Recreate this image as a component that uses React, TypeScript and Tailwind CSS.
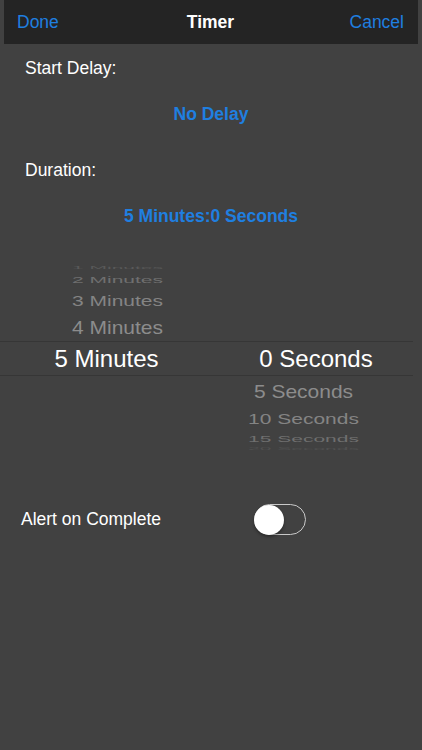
import React from "react";

const blue = "text-[#1f7fe0]";

// Wheel rows: height of the slot, vertical squash and tint, outermost first
const minuteRows = [
  { label: "1 Minutes", h: "h-[7px]", scale: "scale-y-[0.2]", color: "text-[#595959]" },
  { label: "2 Minutes", h: "h-[16px]", scale: "scale-y-[0.45]", color: "text-[#6f6f6f]" },
  { label: "3 Minutes", h: "h-[26px]", scale: "scale-y-[0.68]", color: "text-[#848484]" },
  { label: "4 Minutes", h: "h-[28px]", scale: "scale-y-[0.88]", color: "text-[#8c8c8c]" },
];

const secondRows = [
  { label: "5 Seconds", h: "h-[30px]", scale: "scale-y-[0.88]", color: "text-[#8c8c8c]" },
  { label: "10 Seconds", h: "h-[24px]", scale: "scale-y-[0.68]", color: "text-[#848484]" },
  { label: "15 Seconds", h: "h-[16px]", scale: "scale-y-[0.45]", color: "text-[#6f6f6f]" },
  { label: "20 Seconds", h: "h-[4px]", scale: "scale-y-[0.15]", color: "text-[#505050]" },
];

function WheelRow({
  label,
  h,
  scale,
  color,
}: {
  label: string;
  h: string;
  scale: string;
  color: string;
}) {
  return (
    <div className={`flex items-center justify-center overflow-visible ${h}`}>
      <span className={`whitespace-nowrap text-[21px] leading-none ${scale} ${color}`}>
        {label}
      </span>
    </div>
  );
}

function Toggle() {
  return (
    <div className="flex h-[31px] w-[52px] items-center rounded-full border-[1.5px] border-[#c9c9c9]">
      <div className="size-[30px] -ml-[1.5px] rounded-full bg-white shadow-[0_2px_3px_rgba(0,0,0,0.35)]" />
    </div>
  );
}

export default function App() {
  return (
    <div
      className="flex h-[750px] w-[422px] flex-col bg-[#414141] text-white"
      style={{ fontFamily: '"Liberation Sans", Arial, sans-serif' }}
    >
      {/* Nav bar */}
      <div className="mx-1 grid h-11 grid-cols-[1fr_auto_1fr] items-center bg-[#242424] pl-[13px] pr-[14px] pt-px text-[17.5px]">
        <span className={blue}>Done</span>
        <span className="font-bold">Timer</span>
        <span className={`text-right ${blue}`}>Cancel</span>
      </div>

      <div className="mt-[14px] pl-[25px] text-[17.5px] leading-5">Start Delay:</div>
      <div className={`mt-[26px] text-center text-[17.5px] font-bold leading-5 ${blue}`}>
        No Delay
      </div>

      <div className="mt-[36px] pl-[25px] text-[17.5px] leading-5">Duration:</div>
      <div className={`mt-[26px] text-center text-[17.5px] font-bold leading-5 ${blue}`}>
        5 Minutes:0 Seconds
      </div>

      {/* Picker wheel */}
      <div className="mt-[38px] flex flex-col">
        <div className="grid grid-cols-[207px_1fr]">
          <div className="flex flex-col pl-[28px]">
            {minuteRows.map((r) => (
              <WheelRow key={r.label} {...r} />
            ))}
          </div>
          <div />
        </div>
        <div className="mr-[9px] grid h-[35px] grid-cols-[207px_1fr] items-center border-y border-[#363636]">
          <span className="pl-[6px] text-center text-[24px] leading-none">5 Minutes</span>
          <span className="pl-[12px] text-center text-[24px] leading-none">0 Seconds</span>
        </div>
        <div className="grid grid-cols-[207px_1fr]">
          <div />
          <div className="flex flex-col pr-[22px]">
            {secondRows.map((r) => (
              <WheelRow key={r.label} {...r} />
            ))}
          </div>
        </div>
      </div>

      {/* Alert switch */}
      <div className="mt-[54px] flex h-[31px] items-center">
        <span className="w-[254px] shrink-0 pl-[21px] text-[17.5px]">Alert on Complete</span>
        <Toggle />
      </div>
    </div>
  );
}
